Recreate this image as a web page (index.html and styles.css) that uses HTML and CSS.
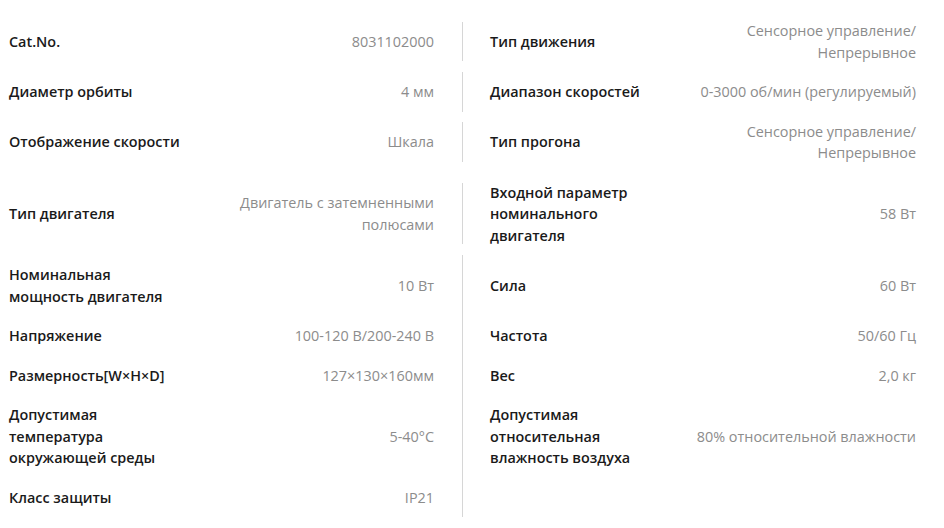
FILE: index.html
```html
<!DOCTYPE html>
<html lang="ru">
<head>
<meta charset="utf-8">
<title>Характеристики</title>
<link rel="stylesheet" href="styles.css">
</head>
<body>
<div class="specs">
  <div class="row">
    <div class="cell cell-left"><div class="label">Cat.No.</div><div class="value">8031102000</div></div>
    <div class="cell cell-right"><div class="label">Тип движения</div><div class="value">Сенсорное управление/<wbr>Непрерывное</div></div>
  </div>
  <div class="row">
    <div class="cell cell-left"><div class="label">Диаметр орбиты</div><div class="value">4 мм</div></div>
    <div class="cell cell-right"><div class="label">Диапазон скоростей</div><div class="value">0-3000 об/мин (регулируемый)</div></div>
  </div>
  <div class="row">
    <div class="cell cell-left"><div class="label">Отображение скорости</div><div class="value">Шкала</div></div>
    <div class="cell cell-right"><div class="label">Тип прогона</div><div class="value">Сенсорное управление/<wbr>Непрерывное</div></div>
  </div>
  <div class="row">
    <div class="cell cell-left"><div class="label">Тип двигателя</div><div class="value">Двигатель с затемненными полюсами</div></div>
    <div class="cell cell-right"><div class="label">Входной параметр номинального двигателя</div><div class="value">58 Вт</div></div>
  </div>
  <div class="row">
    <div class="cell cell-left"><div class="label">Номинальная мощность двигателя</div><div class="value">10 Вт</div></div>
    <div class="cell cell-right"><div class="label">Сила</div><div class="value">60 Вт</div></div>
  </div>
  <div class="row">
    <div class="cell cell-left"><div class="label">Напряжение</div><div class="value">100-120 В/200-240 В</div></div>
    <div class="cell cell-right"><div class="label">Частота</div><div class="value">50/60 Гц</div></div>
  </div>
  <div class="row">
    <div class="cell cell-left"><div class="label">Размерность[W×H×D]</div><div class="value">127×130×160мм</div></div>
    <div class="cell cell-right"><div class="label">Вес</div><div class="value">2,0 кг</div></div>
  </div>
  <div class="row">
    <div class="cell cell-left"><div class="label">Допустимая температура окружающей среды</div><div class="value">5-40°C</div></div>
    <div class="cell cell-right"><div class="label">Допустимая относительная влажность воздуха</div><div class="value">80% относительной влажности</div></div>
  </div>
  <div class="row">
    <div class="cell cell-left"><div class="label">Класс защиты</div><div class="value">IP21</div></div>
    <div class="cell cell-right cell-empty"></div>
  </div>
</div>
</body>
</html>
```

FILE: styles.css
```css
html, body {
  margin: 0;
  padding: 0;
  background: #ffffff;
}

body {
  font-family: "Open Sans", "Noto Sans", sans-serif;
  font-size: 14.4px;
  line-height: 21.5px;
  color: #1a1a1a;
}

.specs {
  padding-top: 11px;
  width: 944px;
}

.row {
  display: grid;
  grid-template-columns: 463px 481px;
  align-items: center;
}

.cell {
  display: flex;
  align-items: center;
  padding-top: 9px;
  padding-bottom: 9px;
}

.cell-left {
  padding-left: 9px;
  padding-right: 28px;
  border-right: 1px solid #d6d6d6;
}

.cell-right {
  padding-left: 27px;
  padding-right: 28px;
}

.label {
  flex: 0 0 178px;
  font-weight: 600;
  color: #1a1a1a;
}

.value {
  flex: 1 1 auto;
  min-width: 0;
  text-align: right;
  color: #8c8c8c;
}
```
